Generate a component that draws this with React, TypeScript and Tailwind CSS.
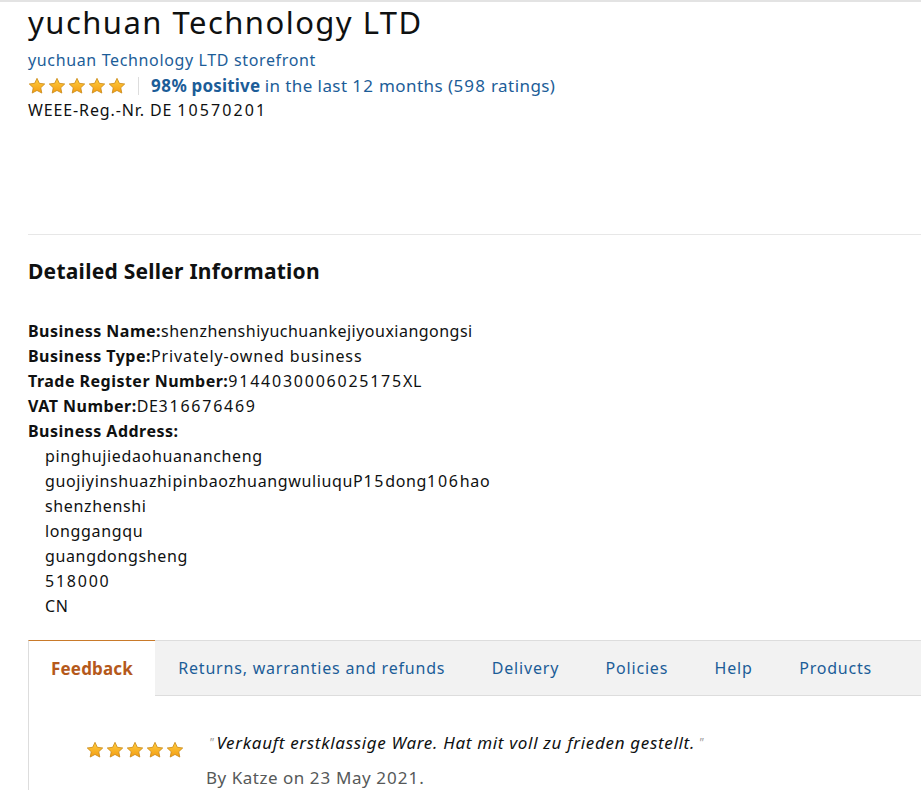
import React from 'react';

// digits in the reference font run much wider than Noto's, so they get their own tracking
function Tx({ s, digits = 'tracking-[0.11em]' }: { s: string; digits?: string }) {
  return (
    <>
      {s.split(/(\d+)/).map((part, i) =>
        /^\d+$/.test(part) ? (
          <span key={i} className={digits}>
            {part}
          </span>
        ) : (
          <React.Fragment key={i}>{part}</React.Fragment>
        )
      )}
    </>
  );
}

function Star({ size = 18 }: { size?: number }) {
  return (
    <svg width={size} height={size} viewBox="0 0 24 24" className="shrink-0">
      <defs>
        <linearGradient id="sg" x1="0" y1="0" x2="0" y2="1">
          <stop offset="0" stopColor="#ffce3d" />
          <stop offset="1" stopColor="#f39c12" />
        </linearGradient>
      </defs>
      <path
        d="M12 1.8l3.1 6.6 7.2.9-5.3 5 1.4 7.1L12 17.9l-6.4 3.5 1.4-7.1-5.3-5 7.2-.9z"
        fill="url(#sg)"
        stroke="#c98a1a"
        strokeWidth="1.1"
        strokeLinejoin="round"
      />
    </svg>
  );
}

function Stars() {
  return (
    <div className="flex gap-[2px]">
      {[0, 1, 2, 3, 4].map((i) => (
        <Star key={i} />
      ))}
    </div>
  );
}

const details = [
  { label: 'Business Name:', value: 'shenzhenshiyuchuankejiyouxiangongsi', track: 'tracking-[0.03em]' },
  { label: 'Business Type:', value: 'Privately-owned business', track: 'tracking-[0.055em]' },
  { label: 'Trade Register Number:', value: '9144030006025175XL', track: 'tracking-[0.04em]' },
  { label: 'VAT Number:', value: 'DE316676469', track: 'tracking-[0.04em]' },
];

const address = [
  'pinghujiedaohuanancheng',
  'guojiyinshuazhipinbaozhuangwuliuquP15dong106hao',
  'shenzhenshi',
  'longgangqu',
  'guangdongsheng',
  '518000',
  'CN',
];

const tabs = ['Returns, warranties and refunds', 'Delivery', 'Policies', 'Help', 'Products'];

export default function App() {
  return (
    <div
      className="min-h-[796px] w-[921px] overflow-hidden bg-white text-[#0f1111]"
      style={{ fontFamily: '"Noto Sans", Arial, sans-serif' }}
    >
      <div className="h-[2px] bg-[#e3e3e3]" />
      <div className="pl-[28px]">
        <h1 className="mt-[1px] text-[31px] leading-[38px] tracking-[0.047em]">yuchuan Technology LTD</h1>
        <div className="mt-[7px] text-[16px] leading-[25px] tracking-[0.04em] text-[#1c5d98]">
          yuchuan Technology LTD storefront
        </div>
        <div className="flex h-[25px] items-center text-[17px] text-[#1c5d98]">
          <Stars />
          <span className="mx-[12px] h-[18px] w-px bg-[#dddddd]" />
          <span>
            <b className="tracking-[0.01em]">
              <Tx s="98% positive" digits="tracking-[0.03em]" />
            </b>{' '}
            <span className="tracking-[0.025em]">
              <Tx s="in the last 12 months (598 ratings)" digits="tracking-[0.07em]" />
            </span>
          </span>
        </div>
        <div className="text-[16px] leading-[25px] tracking-[0.055em]">
          <Tx s="WEEE-Reg.-Nr. DE 10570201" digits="tracking-[0.13em]" />
        </div>

        <div className="mt-[111px] h-px bg-[#e7e7e7]" />

        <h2 className="mt-[22px] text-[21px] font-bold leading-[28px] tracking-[0.012em]">
          Detailed Seller Information
        </h2>

        <div className="mt-[34px] text-[16px] leading-[25px]">
          {details.map((d) => (
            <div key={d.label}>
              <span className="font-bold tracking-[0.03em]">{d.label}</span>
              <span className={d.track}>
                <Tx s={d.value} />
              </span>
            </div>
          ))}
          <div className="font-bold tracking-[0.03em]">Business Address:</div>
          <div className="pl-[17px] tracking-[0.04em]">
            {address.map((a) => (
              <div key={a}>
                <Tx s={a} />
              </div>
            ))}
          </div>
        </div>

        <div className="mt-[21px] flex h-[56px] border-y border-[#dddddd] bg-[#f2f2f2] text-[16px]">
          <div className="-mb-px -mt-px flex items-center border-l border-t border-l-[#dddddd] border-t-[#c97a2a] bg-white px-[22px] text-[17px] font-bold tracking-[0.01em] text-[#b5591b]">
            Feedback
          </div>
          {tabs.map((t) => (
            <div key={t} className="flex items-center px-[23.25px] tracking-[0.05em] text-[#1c5d98]">
              {t}
            </div>
          ))}
        </div>

        <div className="flex border-l border-[#dddddd] pt-[33px]">
          <div className="ml-[57px] mt-[12px]">
            <Stars />
          </div>
          <div className="ml-[22px] text-[17px]">
            <div className="leading-[28px] italic tracking-[0.04em]">
              <span className="ml-[3px] align-top text-[12px] text-[#999]">"</span>
              <span className="ml-[2px]">Verkauft erstklassige Ware. Hat mit voll zu frieden gestellt.</span>
              <span className="align-top text-[12px] text-[#999]"> "</span>
            </div>
            <div className="mt-[8px] leading-[25px] tracking-[0.03em] text-[#565959]">
              <Tx s="By Katze on 23 May 2021." digits="tracking-[0.06em]" />
            </div>
          </div>
        </div>
      </div>
    </div>
  );
}
